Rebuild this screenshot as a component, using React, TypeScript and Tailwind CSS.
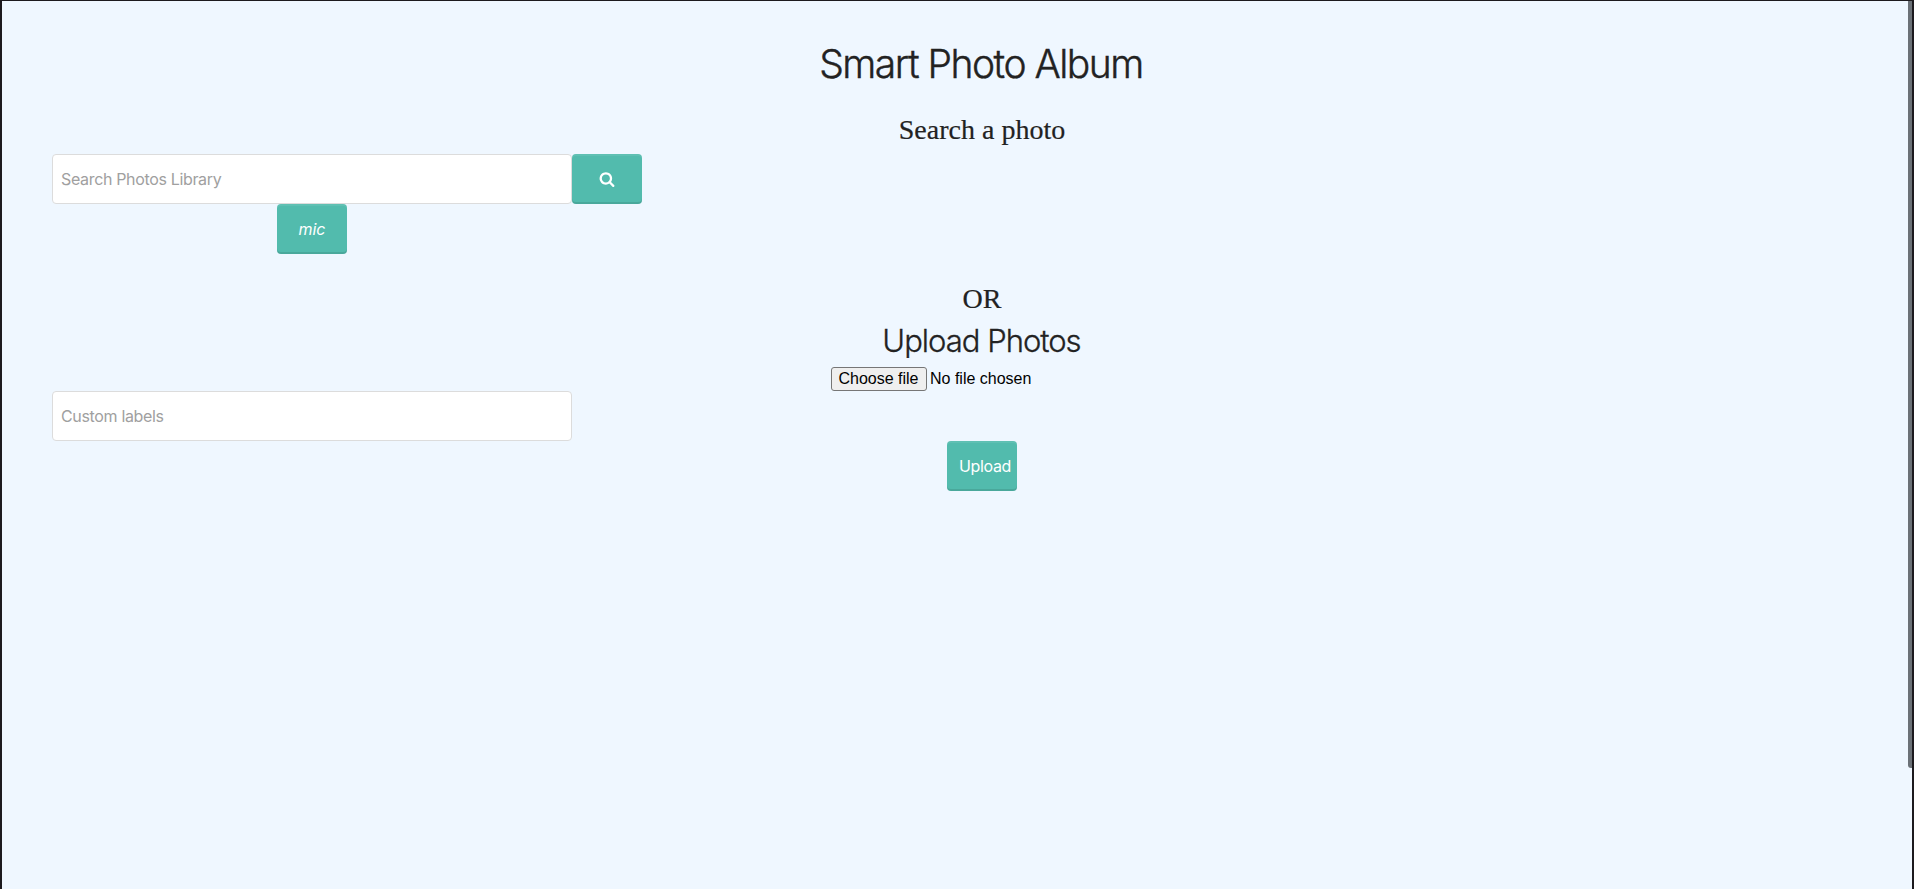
import React from "react";

const actionButton =
  "flex h-[50px] w-[70px] shrink-0 items-center rounded-[4px] bg-[#52bbad] text-base text-white shadow-[inset_0_2px_0_rgba(255,255,255,0.08),inset_0_-2px_0_rgba(0,0,0,0.1)]";
const textField =
  "block h-[50px] w-[520px] rounded-[4px] border border-[#dcdcdc] bg-white px-2 text-base tracking-[-0.34px] text-[#222] placeholder:text-[#a0a0a0] outline-none";

function SearchIcon() {
  return (
    <svg width="16" height="16" viewBox="0 0 1792 1792" fill="currentColor" aria-hidden="true">
      <path d="M1216 832q0-185-131.500-316.500T768 384 451.500 515.500 320 832t131.500 316.500T768 1280t316.500-131.500T1216 832zm512 832q0 52-38 90t-90 38q-54 0-90-38l-343-342q-179 124-399 124-143 0-273.500-55.500t-225-150-150-225T64 832t55.500-273.500 150-225 225-150T768 128t273.500 55.500 225 150 150 225T1472 832q0 220-124 399l343 343q37 37 37 90z" />
    </svg>
  );
}

export default function App() {
  return (
    <div className="flex h-[889px] w-full border-x-2 border-t border-[#1c1a1e] bg-[#eff7ff] font-['Inter',sans-serif] text-[#222]">
      <main className="flex min-w-0 flex-1 flex-col pl-[50px] pt-[39px] -mr-1">
        <h1 className="h-12 pr-[2px] text-center text-[39px] leading-[48px] font-light tracking-[-1.5px] [-webkit-text-stroke:0.4px_#222]">
          Smart Photo Album
        </h1>
        <h3 className="mt-[25px] h-[34px] text-center font-['Liberation_Serif',serif] text-[28px] leading-[34px] [-webkit-text-stroke:0.2px_#222]">
          Search a photo
        </h3>
        <form className="mt-[7px]" onSubmit={(e) => e.preventDefault()}>
          <div className="flex">
            <input className={textField} placeholder="Search Photos Library" />
            <button className={`${actionButton} justify-center`} aria-label="Search">
              <SearchIcon />
            </button>
          </div>
          <div className="flex w-[520px] justify-center">
            <button type="button" className={`${actionButton} justify-center italic`}>mic</button>
          </div>
        </form>
        <h3 className="mt-7 h-[34px] text-center font-['Liberation_Serif',serif] text-[28px] leading-[34px] [-webkit-text-stroke:0.2px_#222]">
          OR
        </h3>
        <h2 className="mt-[6px] h-[38px] pr-px text-center text-[31px] leading-[38px] font-light tracking-[-1px] [-webkit-text-stroke:0.3px_#222]">
          Upload Photos
        </h2>
        <div className="mt-[7px] flex h-6 w-[302px] items-center self-center font-['Liberation_Sans',sans-serif] text-base text-black">
          <button className="h-6 w-24 rounded-[3px] border border-[#767676] bg-[#efefef] pr-px leading-[22px] whitespace-nowrap">
            Choose file
          </button>
          <span className="ml-[3px]">No file chosen</span>
        </div>
        <input className={textField} placeholder="Custom labels" />
        <button className={`${actionButton} self-center pl-3 tracking-[-0.35px]`}>Upload</button>
      </main>
      <div className="h-[767px] w-1 shrink-0 rounded-bl-[3px] bg-[#6b7177]" />
    </div>
  );
}
